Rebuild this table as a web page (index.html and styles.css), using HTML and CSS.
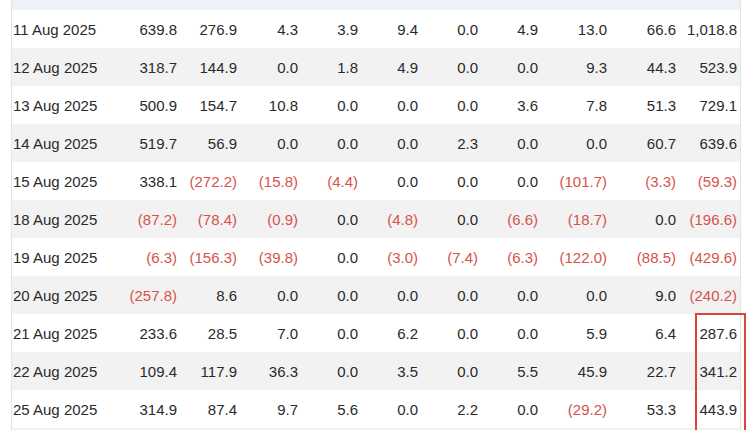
FILE: index.html
```html
<!DOCTYPE html>
<html>
<head>
<meta charset="utf-8">
<link rel="stylesheet" href="styles.css">
</head>
<body>
<div class="wrap">
  <div class="head"></div>
  <div class="rows">
    <div class="row"><span class="d">11 Aug 2025</span><span>639.8</span><span>276.9</span><span>4.3</span><span>3.9</span><span>9.4</span><span>0.0</span><span>4.9</span><span>13.0</span><span>66.6</span><span>1,018.8</span></div>
    <div class="row"><span class="d">12 Aug 2025</span><span>318.7</span><span>144.9</span><span>0.0</span><span>1.8</span><span>4.9</span><span>0.0</span><span>0.0</span><span>9.3</span><span>44.3</span><span>523.9</span></div>
    <div class="row"><span class="d">13 Aug 2025</span><span>500.9</span><span>154.7</span><span>10.8</span><span>0.0</span><span>0.0</span><span>0.0</span><span>3.6</span><span>7.8</span><span>51.3</span><span>729.1</span></div>
    <div class="row"><span class="d">14 Aug 2025</span><span>519.7</span><span>56.9</span><span>0.0</span><span>0.0</span><span>0.0</span><span>2.3</span><span>0.0</span><span>0.0</span><span>60.7</span><span>639.6</span></div>
    <div class="row"><span class="d">15 Aug 2025</span><span>338.1</span><span class="neg">(272.2)</span><span class="neg">(15.8)</span><span class="neg">(4.4)</span><span>0.0</span><span>0.0</span><span>0.0</span><span class="neg">(101.7)</span><span class="neg">(3.3)</span><span class="neg">(59.3)</span></div>
    <div class="row"><span class="d">18 Aug 2025</span><span class="neg">(87.2)</span><span class="neg">(78.4)</span><span class="neg">(0.9)</span><span>0.0</span><span class="neg">(4.8)</span><span>0.0</span><span class="neg">(6.6)</span><span class="neg">(18.7)</span><span>0.0</span><span class="neg">(196.6)</span></div>
    <div class="row"><span class="d">19 Aug 2025</span><span class="neg">(6.3)</span><span class="neg">(156.3)</span><span class="neg">(39.8)</span><span>0.0</span><span class="neg">(3.0)</span><span class="neg">(7.4)</span><span class="neg">(6.3)</span><span class="neg">(122.0)</span><span class="neg">(88.5)</span><span class="neg">(429.6)</span></div>
    <div class="row"><span class="d">20 Aug 2025</span><span class="neg">(257.8)</span><span>8.6</span><span>0.0</span><span>0.0</span><span>0.0</span><span>0.0</span><span>0.0</span><span>0.0</span><span>9.0</span><span class="neg">(240.2)</span></div>
    <div class="row"><span class="d">21 Aug 2025</span><span>233.6</span><span>28.5</span><span>7.0</span><span>0.0</span><span>6.2</span><span>0.0</span><span>0.0</span><span>5.9</span><span>6.4</span><span>287.6</span></div>
    <div class="row"><span class="d">22 Aug 2025</span><span>109.4</span><span>117.9</span><span>36.3</span><span>0.0</span><span>3.5</span><span>0.0</span><span>5.5</span><span>45.9</span><span>22.7</span><span>341.2</span></div>
    <div class="row"><span class="d">25 Aug 2025</span><span>314.9</span><span>87.4</span><span>9.7</span><span>5.6</span><span>0.0</span><span>2.2</span><span>0.0</span><span class="neg">(29.2)</span><span>53.3</span><span>443.9</span></div>
    <div class="row"><span class="d"></span></div>
  </div>
  <div class="mark"></div>
</div>
</body>
</html>
```

FILE: styles.css
```css
html, body {
  margin: 0;
  padding: 0;
  background: #ffffff;
  overflow: hidden;
}
body {
  font-family: "Liberation Sans", Arial, sans-serif;
  font-size: 15px;
  color: #2a2a2a;
}
.wrap {
  position: relative;
  margin-left: 11px;
  width: 728px;
  border-left: 1px solid #e4e4e6;
  border-right: 1px solid #e4e4e6;
  height: 440px;
}
.head {
  height: 10px;
  background: #eef1f9;
}
.row {
  display: grid;
  grid-template-columns: 105px 60px 60px 61px 60px 60px 60px 60px 69px 69px 61px;
  height: 38px;
  align-items: center;
  background: #ffffff;
}
.row:nth-child(even) {
  background: #f2f2f2;
}
.row span {
  text-align: right;
  white-space: nowrap;
}
.row span.d {
  text-align: left;
  padding-left: 1px;
}
.neg {
  color: #d6524b;
}
.mark {
  position: absolute;
  left: 683px;
  top: 313px;
  width: 47px;
  height: 140px;
  border: 2px solid #d9453a;
}
```
